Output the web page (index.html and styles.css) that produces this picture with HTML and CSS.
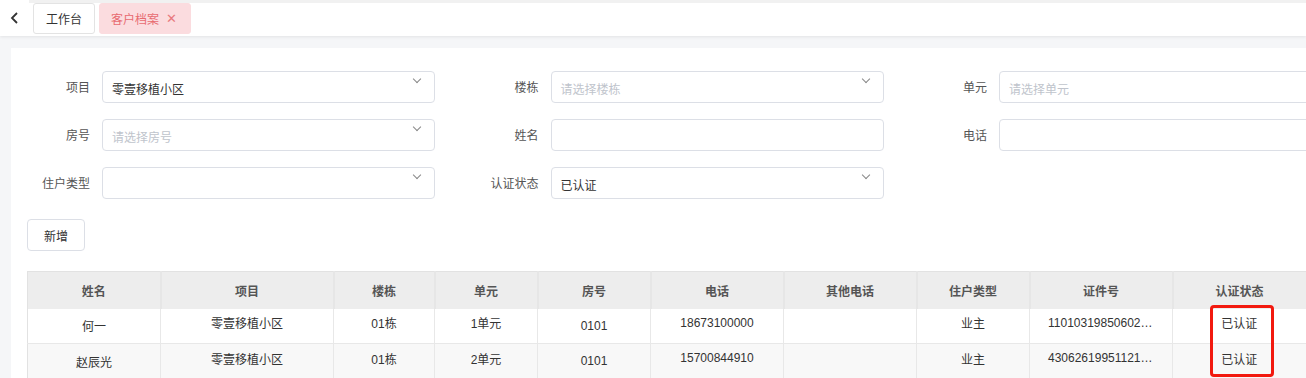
FILE: index.html
```html
<!DOCTYPE html>
<html lang="zh-CN">
<head>
    <meta charset="UTF-8">
    <meta name="viewport" content="width=device-width, initial-scale=1.0">
    <title>客户档案</title>
    <link rel="stylesheet" href="styles.css">
</head>
<body>
    <div class="tabbar">
        <div class="back">
            <svg width="10" height="12" viewBox="0 0 10 12"><path d="M7 1 L2 6 L7 11" fill="none" stroke="#333" stroke-width="1.8"/></svg>
        </div>
        <div class="tabs">
            <div class="tab">工作台</div>
            <div class="tab active">客户档案<span class="close">✕</span></div>
        </div>
    </div>

    <div class="main">
        <div class="card">
            <div class="filters">
                <div class="form-item">
                    <label>项目</label>
                    <div class="input select"><span>零壹移植小区</span></div>
                </div>
                <div class="form-item">
                    <label>楼栋</label>
                    <div class="input select"><span class="ph">请选择楼栋</span></div>
                </div>
                <div class="form-item">
                    <label>单元</label>
                    <div class="input wide"><span class="ph">请选择单元</span></div>
                </div>
                <div class="form-item">
                    <label>房号</label>
                    <div class="input select"><span class="ph">请选择房号</span></div>
                </div>
                <div class="form-item">
                    <label>姓名</label>
                    <div class="input"></div>
                </div>
                <div class="form-item">
                    <label>电话</label>
                    <div class="input wide"></div>
                </div>
                <div class="form-item">
                    <label>住户类型</label>
                    <div class="input select"></div>
                </div>
                <div class="form-item">
                    <label>认证状态</label>
                    <div class="input select"><span>已认证</span></div>
                </div>
            </div>

            <button type="button" class="btn">新增</button>

            <div class="table-wrap">
                <table>
                    <colgroup>
                        <col style="width:133px"><col style="width:173px"><col style="width:101px">
                        <col style="width:103px"><col style="width:113px"><col style="width:133px">
                        <col style="width:133px"><col style="width:113px"><col style="width:143px">
                        <col style="width:133px">
                    </colgroup>
                    <thead>
                        <tr>
                            <th>姓名</th><th>项目</th><th>楼栋</th><th>单元</th><th>房号</th>
                            <th>电话</th><th>其他电话</th><th>住户类型</th><th>证件号</th><th>认证状态</th>
                        </tr>
                    </thead>
                    <tbody>
                        <tr>
                            <td>何一</td><td class="hi">零壹移植小区</td><td class="hi">01栋</td><td class="hi">1单元</td>
                            <td>0101</td><td class="hi">18673100000</td><td></td><td class="hi">业主</td>
                            <td class="hi">110103198506021234</td><td class="hi">已认证</td>
                        </tr>
                        <tr>
                            <td>赵辰光</td><td class="hi">零壹移植小区</td><td class="hi">01栋</td><td class="hi">2单元</td>
                            <td>0101</td><td class="hi">15700844910</td><td></td><td class="hi">业主</td>
                            <td class="hi">430626199511210016</td><td class="hi">已认证</td>
                        </tr>
                    </tbody>
                </table>
                <div class="mark"></div>
            </div>
        </div>
    </div>
</body>
</html>
```

FILE: styles.css
```css
html, body {
    margin: 0;
    height: 100%;
    overflow: hidden;
}
body {
    font-family: "Liberation Sans", "Noto Sans CJK SC", sans-serif;
    font-size: 12px;
    color: #333;
    background-color: #f5f6f8;
}
.tabbar {
    display: flex;
    height: 36px;
    background-color: white;
    box-shadow: 0 1px 3px rgba(0, 0, 0, 0.08);
    position: relative;
}
.back {
    width: 29px;
    display: flex;
    justify-content: center;
    align-items: center;
}
.tabs {
    flex: 1;
    display: flex;
    gap: 4px;
    padding: 3px 4px 2px;
    background: linear-gradient(#f1f1f1 0, #f1f1f1 3px, white 3px);
}
.tab {
    display: flex;
    align-items: center;
    padding: 0 12px;
    border: 1px solid #e3e3e3;
    border-radius: 3px;
    background-color: white;
    color: #333;
}
.tab.active {
    background-color: #fbdcdf;
    border-color: #fbdcdf;
    color: #e86a70;
    padding: 0 13px 0 11px;
}
.close {
    margin-left: 7px;
    font-size: 13px;
    color: #e8797e;
}
.main {
    padding: 12px 0 0 11px;
    height: calc(100% - 36px);
    box-sizing: border-box;
    overflow: hidden;
}
.card {
    background-color: white;
    padding: 23px 16px 0;
    width: 1330px;
    height: 100%;
    box-sizing: border-box;
    overflow: hidden;
}
.filters {
    display: grid;
    grid-template-columns: repeat(3, 448.5px);
    row-gap: 16px;
}
.form-item {
    display: flex;
    align-items: center;
}
.form-item label {
    width: 75px;
    padding-right: 12px;
    box-sizing: border-box;
    text-align: right;
    color: #555;
    position: relative;
    top: -1px;
}
.input {
    position: relative;
    width: 333px;
    height: 32px;
    border: 1px solid #dcdfe6;
    border-radius: 4px;
    box-sizing: border-box;
    padding: 0 9px;
    display: flex;
    align-items: center;
    color: #333;
}
.input.wide {
    width: 360px;
}
.input span {
    position: relative;
    top: 1px;
}
.input .ph {
    color: #c0c4cc;
}
.select::after {
    content: "";
    position: absolute;
    right: 14px;
    top: 4px;
    width: 5px;
    height: 5px;
    border-right: 1px solid #888;
    border-bottom: 1px solid #888;
    transform: rotate(45deg);
}
.btn {
    margin-top: 20px;
    height: 32px;
    padding: 0 16px;
    background-color: white;
    border: 1px solid #dcdfe6;
    border-radius: 4px;
    font-family: inherit;
    font-size: 12px;
    color: #333;
    cursor: pointer;
}
.table-wrap {
    position: relative;
    margin-top: 20px;
}
table {
    border-collapse: collapse;
    table-layout: fixed;
    width: 1278px;
}
th {
    height: 37px;
    padding: 0;
    background-color: #ededed;
    border-top: 1px solid #e2e2e2;
    border-left: 2px solid #e6e6e6;
    color: #555;
    font-weight: bold;
    box-sizing: border-box;
}
th:first-child, td:first-child {
    border-left: 1px solid #e2e2e2;
}
td {
    height: 35px;
    padding: 0 18px;
    text-align: center;
    border-left: 1px solid #e8e8e8;
    border-bottom: 1px solid #e8e8e8;
    white-space: nowrap;
    overflow: hidden;
    text-overflow: ellipsis;
    box-sizing: border-box;
}
td.hi {
    padding-bottom: 6px;
}
tbody tr:nth-child(2) td {
    background-color: #f8f8f8;
}
.mark {
    position: absolute;
    left: 1183px;
    top: 34px;
    width: 58px;
    height: 66px;
    border: 3px solid #f2190f;
    border-radius: 4px;
}
```
